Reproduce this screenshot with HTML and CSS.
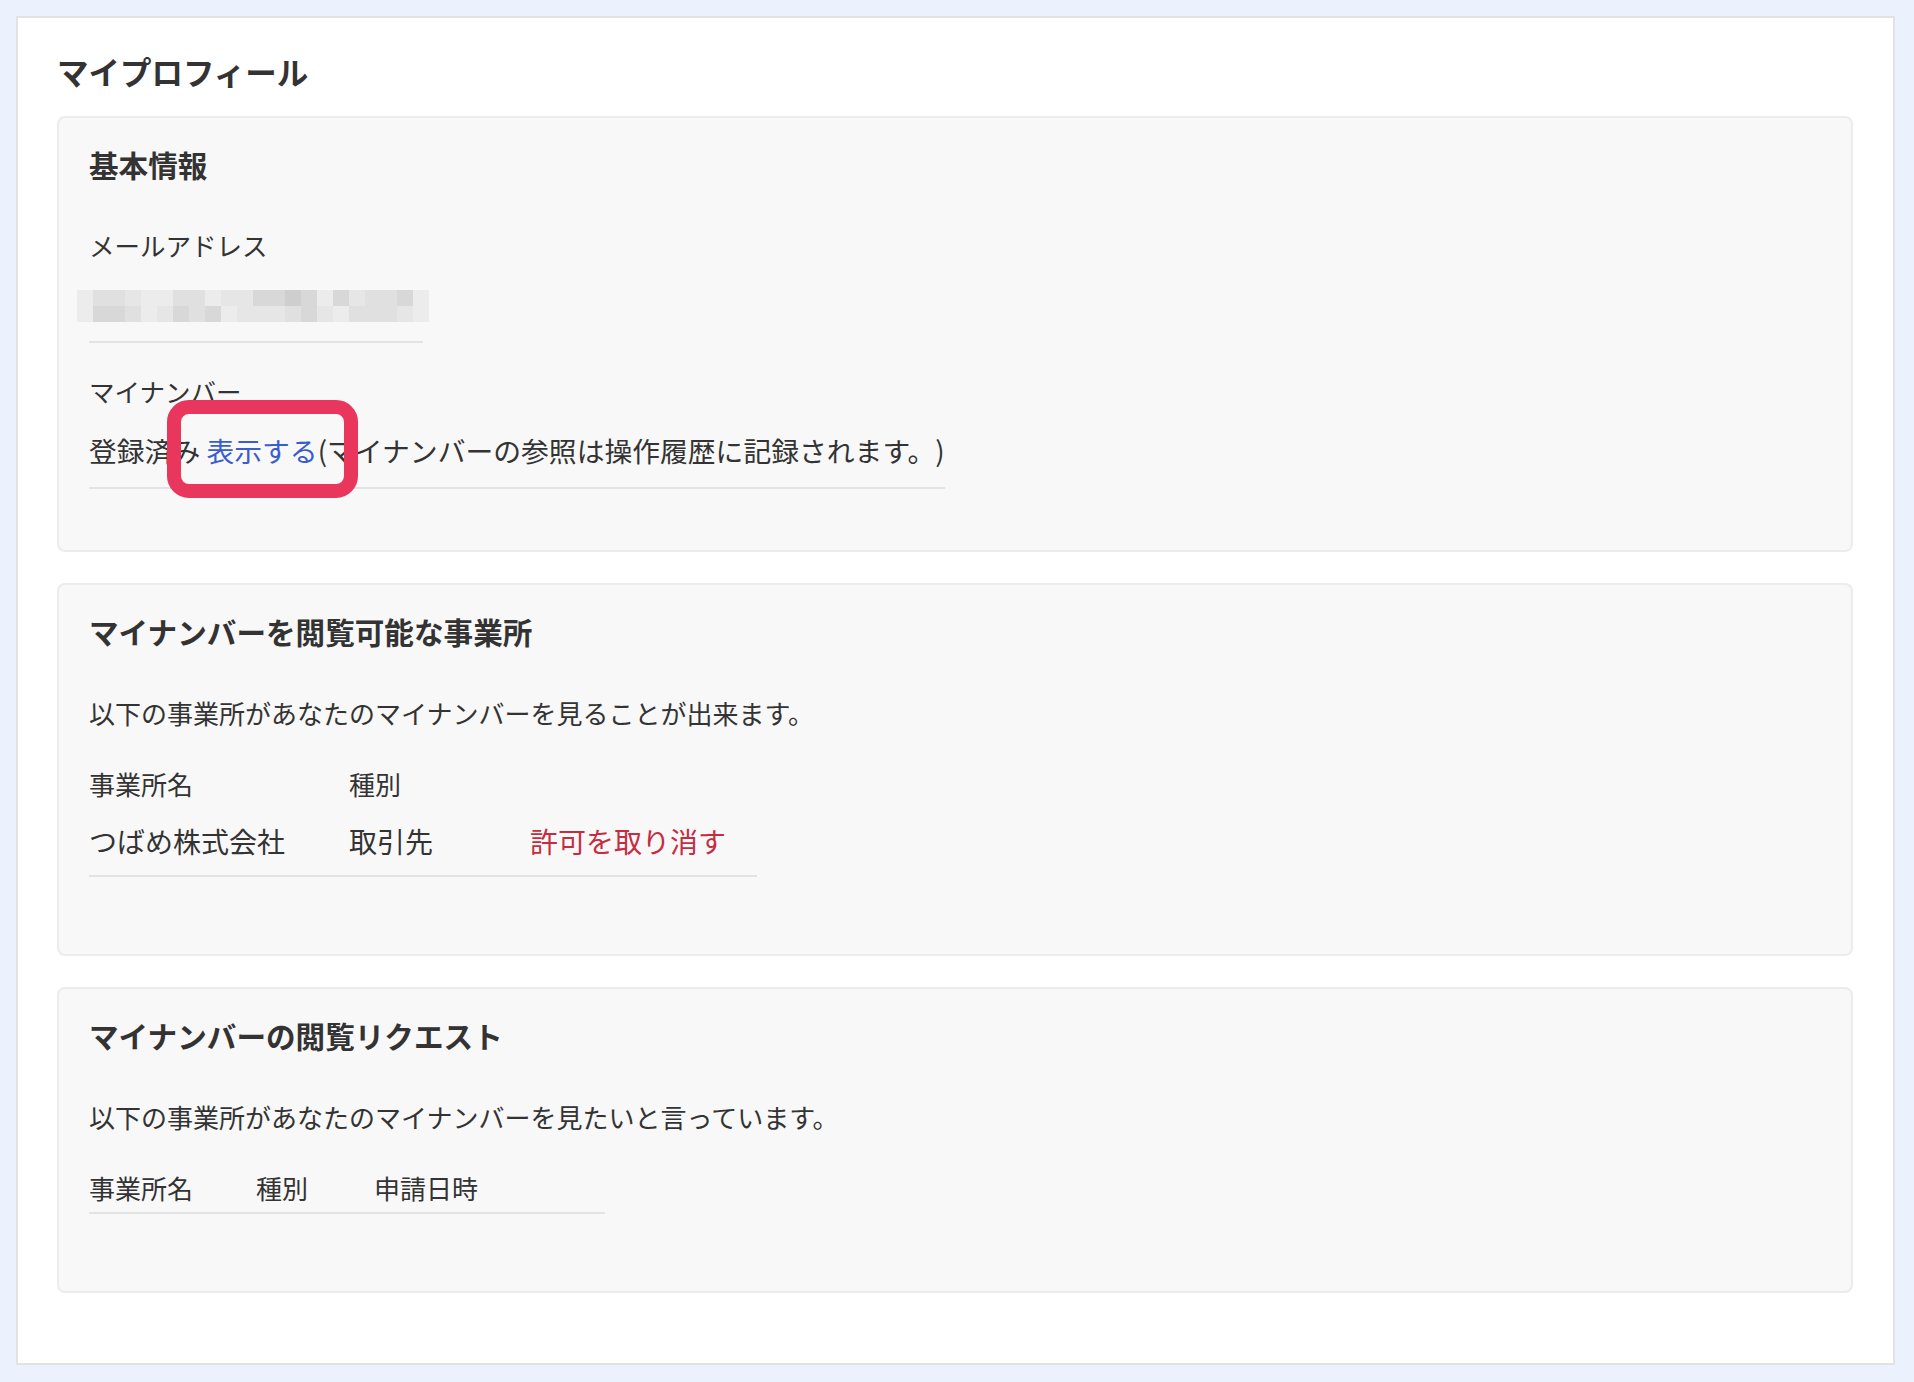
FILE: index.html
```html
<!DOCTYPE html>
<html lang="ja">
<head>
<meta charset="utf-8">
<title>マイプロフィール</title>
<link rel="stylesheet" href="styles.css">
</head>
<body>
<div class="panel">
  <h1 class="page-title">マイプロフィール</h1>

  <section class="card">
    <h2 class="card-title">基本情報</h2>
    <div class="field field-email">
      <div class="field-label">メールアドレス</div>
      <div class="mosaic" aria-label="メールアドレス（非表示）">
        <span class="c1"></span><span class="c3"></span><span class="c3"></span><span class="c2"></span><span class="c1"></span><span class="c1"></span><span class="c3"></span><span class="c3"></span><span class="c1"></span><span class="c2"></span><span class="c2"></span><span class="c4"></span><span class="c4"></span><span class="c5"></span><span class="c4"></span><span class="c1"></span><span class="c4"></span><span class="c2"></span><span class="c3"></span><span class="c3"></span><span class="c4"></span><span class="c1"></span>
        <span class="c1"></span><span class="c4"></span><span class="c4"></span><span class="c3"></span><span class="c1"></span><span class="c2"></span><span class="c4"></span><span class="c3"></span><span class="c4"></span><span class="c1"></span><span class="c2"></span><span class="c2"></span><span class="c2"></span><span class="c3"></span><span class="c4"></span><span class="c2"></span><span class="c1"></span><span class="c3"></span><span class="c3"></span><span class="c3"></span><span class="c2"></span><span class="c1"></span>
      </div>
    </div>
    <div class="field field-number">
      <div class="field-label">マイナンバー</div>
      <div class="field-value">登録済み <a class="link highlight" href="#">表示する<span class="marker"></span></a>(マイナンバーの参照は操作履歴に記録されます。)</div>
    </div>
  </section>

  <section class="card">
    <h2 class="card-title">マイナンバーを閲覧可能な事業所</h2>
    <p class="card-desc">以下の事業所があなたのマイナンバーを見ることが出来ます。</p>
    <table class="list list-allowed">
      <thead>
        <tr><th class="w-a1">事業所名</th><th class="w-a2">種別</th><th class="w-a3"></th></tr>
      </thead>
      <tbody>
        <tr><td>つばめ株式会社</td><td>取引先</td><td><a class="revoke" href="#">許可を取り消す</a></td></tr>
      </tbody>
    </table>
  </section>

  <section class="card">
    <h2 class="card-title">マイナンバーの閲覧リクエスト</h2>
    <p class="card-desc">以下の事業所があなたのマイナンバーを見たいと言っています。</p>
    <table class="list list-requests">
      <thead>
        <tr><th class="w-b1">事業所名</th><th class="w-b2">種別</th><th class="w-b3">申請日時</th></tr>
      </thead>
    </table>
  </section>
</div>
</body>
</html>
```

FILE: styles.css
```css
html, body {
  background: #ecf2fd;
}
body {
  margin: 16px 19px 17px 16px;
  font-family: "Noto Sans CJK JP", "Noto Sans", "Liberation Sans", sans-serif;
  font-size: 26px;
  color: #333333;
  text-spacing-trim: space-all;
}

.panel {
  background: #ffffff;
  border: 2px solid #e2e2e2;
  padding: 31px 40px 70px 39px;
}

.page-title {
  margin: 0 0 23px;
  font-size: 31.5px;
  line-height: 44px;
  font-weight: 700;
  color: #333333;
}

.card {
  background: #f8f8f8;
  border: 2px solid #ececec;
  border-radius: 8px;
  padding: 27px 30px 61px 30px;
}
.card + .card {
  margin-top: 31px;
}

.card-title {
  margin: 0;
  font-size: 29.6px;
  line-height: 40px;
  font-weight: 700;
  color: #333333;
}

.field {
  width: fit-content;
  border-bottom: 2px solid #e3e3e3;
}
.field-label {
  font-size: 25.5px;
  line-height: 40px;
}
.field-email {
  margin-top: 40px;
  padding-bottom: 19px;
}
.field-number {
  margin-top: 28px;
  padding-bottom: 17px;
}
.field-value {
  margin-top: 19px;
  font-size: 27.8px;
  line-height: 40px;
  white-space: nowrap;
}

.mosaic {
  margin: 25px -6px 0 -12px;
  display: grid;
  grid-template-columns: repeat(22, 16px);
  grid-auto-rows: 16px;
}
.mosaic .c1 { background: #ececec; }
.mosaic .c2 { background: #e6e6e6; }
.mosaic .c3 { background: #e0e0e0; }
.mosaic .c4 { background: #d8d8d8; }
.mosaic .c5 { background: #cecece; }

.link {
  color: #3a5ccc;
  text-decoration: none;
}
.highlight {
  position: relative;
}
.marker {
  position: absolute;
  left: -39px;
  top: 50%;
  margin-top: -50px;
  width: 191px;
  height: 98px;
  box-sizing: border-box;
  border: 14px solid #e8365d;
  border-radius: 22px;
  pointer-events: none;
}

.card-desc {
  margin: 41px 0 0;
  line-height: 40px;
}

.list {
  margin: 31px 0 16px;
  border-collapse: collapse;
  table-layout: fixed;
  border-bottom: 2px solid #e3e3e3;
}
.list th {
  text-align: left;
  font-weight: 400;
  line-height: 40px;
  padding: 0 0 4px 0;
}
.list td {
  font-size: 28px;
  line-height: 40px;
  padding: 13px 0 14px 0;
  white-space: nowrap;
}
.w-a1 { width: 260px; }
.w-a2 { width: 181px; }
.w-a3 { width: 227px; }
.w-b1 { width: 167px; }
.w-b2 { width: 118px; }
.w-b3 { width: 231px; }

.revoke {
  color: #c62c3f;
  text-decoration: none;
}
```
